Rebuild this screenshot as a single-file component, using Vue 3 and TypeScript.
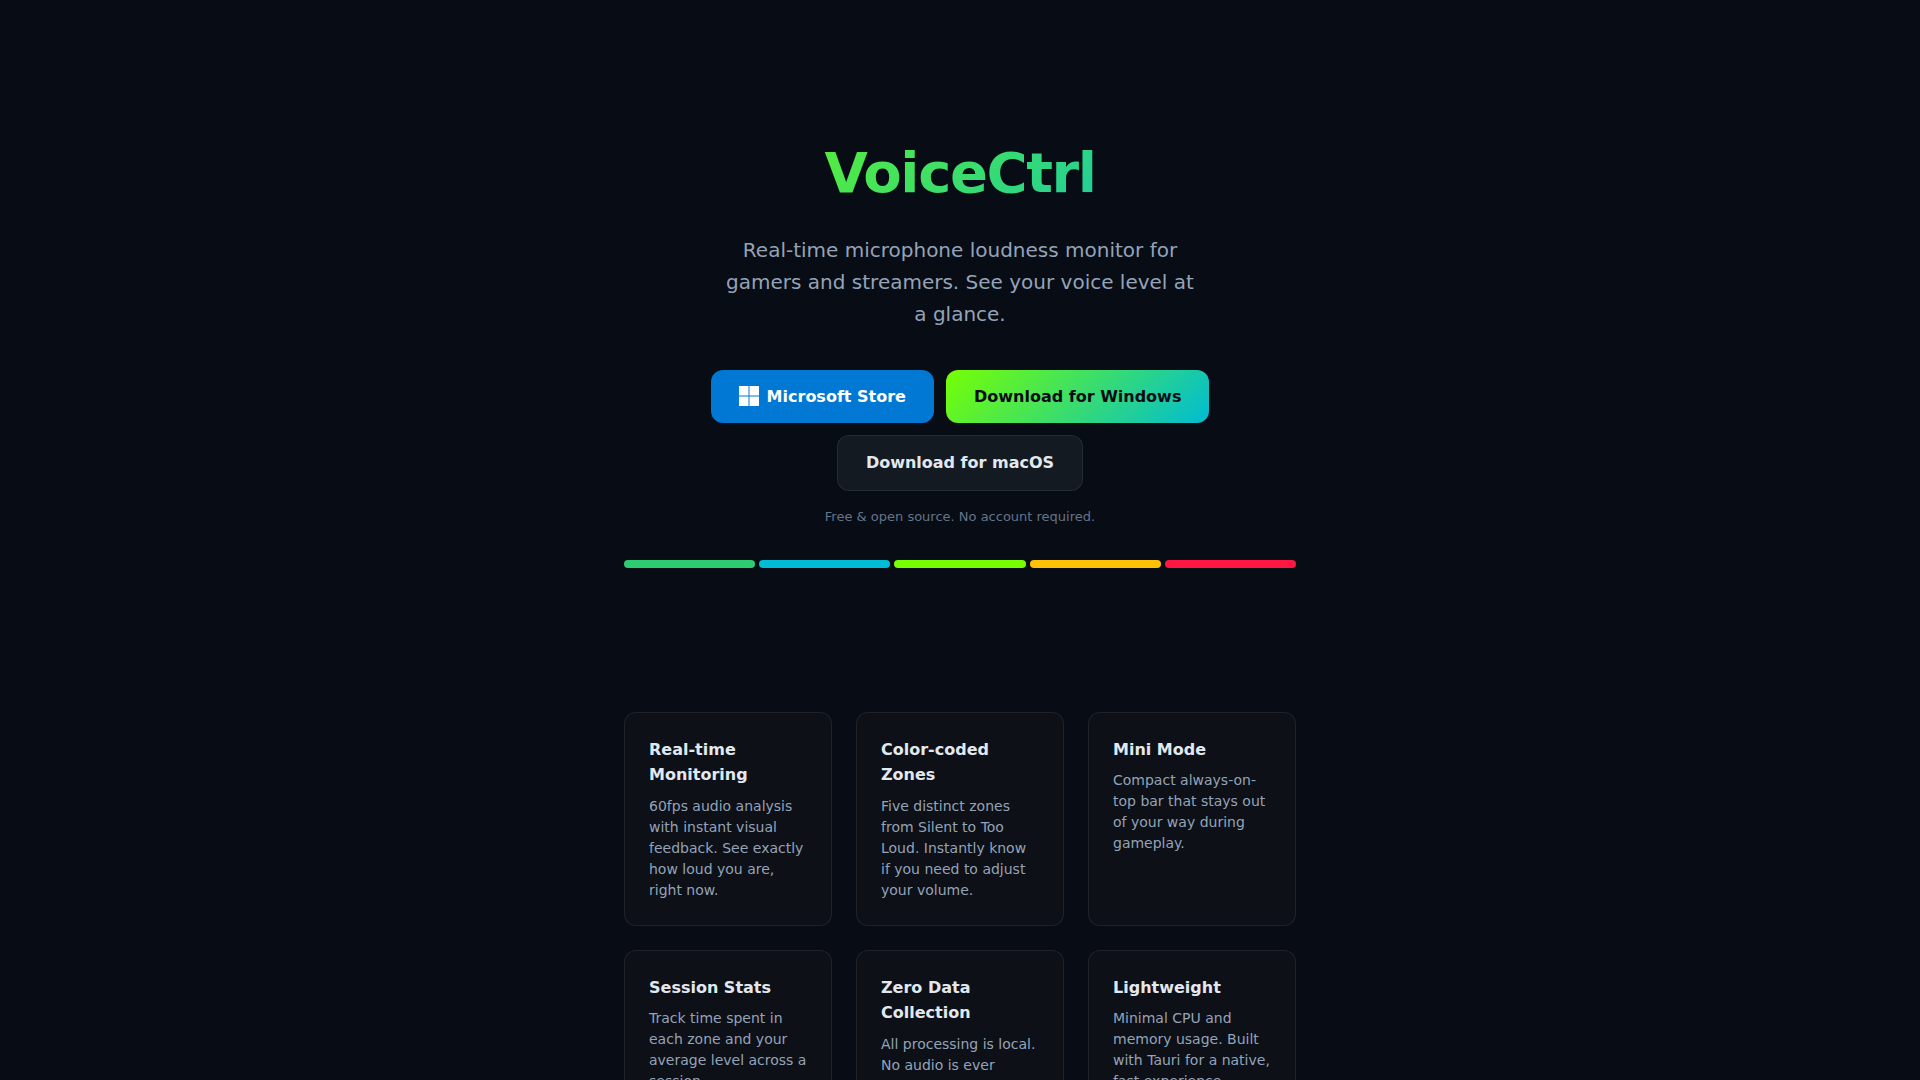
<script setup lang="ts">
interface Feature {
  title: string
  text: string
}

const zones: string[] = ['silent', 'quiet', 'good', 'loud', 'too-loud']

const features: Feature[] = [
  {
    title: 'Real-time Monitoring',
    text: '60fps audio analysis with instant visual feedback. See exactly how loud you are, right now.',
  },
  {
    title: 'Color-coded Zones',
    text: 'Five distinct zones from Silent to Too Loud. Instantly know if you need to adjust your volume.',
  },
  {
    title: 'Mini Mode',
    text: 'Compact always-on-top bar that stays out of your way during gameplay.',
  },
  {
    title: 'Session Stats',
    text: 'Track time spent in each zone and your average level across a session.',
  },
  {
    title: 'Zero Data Collection',
    text: 'All processing is local. No audio is ever recorded or transmitted.',
  },
  {
    title: 'Lightweight',
    text: 'Minimal CPU and memory usage. Built with Tauri for a native, fast experience.',
  },
]
</script>

<template>
  <main class="page">
    <header class="hero">
      <h1>VoiceCtrl</h1>
      <p class="tagline">
        Real-time microphone loudness monitor for gamers and streamers. See your voice level at a glance.
      </p>
      <div class="actions">
        <a class="btn store" href="#store">
          <svg width="20" height="20" viewBox="0 0 21 21" fill="currentColor" aria-hidden="true">
            <path d="M0 0h10v10H0zM11 0h10v10H11zM0 11h10v10H0zM11 11h10v10H11z" />
          </svg>
          Microsoft Store
        </a>
        <a class="btn windows" href="#windows">Download for Windows</a>
        <a class="btn macos" href="#macos">Download for macOS</a>
      </div>
      <p class="note">Free &amp; open source. No account required.</p>
      <div class="zones" aria-hidden="true">
        <span v-for="zone in zones" :key="zone" :class="['zone', zone]"></span>
      </div>
    </header>

    <section class="features">
      <article v-for="feature in features" :key="feature.title" class="card">
        <h2>{{ feature.title }}</h2>
        <p>{{ feature.text }}</p>
      </article>
    </section>
  </main>
</template>

<style>
body {
  margin: 0;
  background: #080c14;
}
</style>

<style scoped>
.page {
  box-sizing: border-box;
  max-width: 720px;
  margin: 0 auto;
  padding: 48px 24px;
  color: #e2e8f0;
  font-family: "DejaVu Sans", sans-serif;
  font-size: 16px;
  line-height: 1.6;
}

.hero {
  padding: 80px 0;
  text-align: center;
}

h1 {
  margin: 0 0 16px;
  font-size: 56px;
  font-weight: 700;
  letter-spacing: -0.025em;
  background: linear-gradient(135deg, #76ff03, #00bcd4);
  background-clip: text;
  -webkit-background-clip: text;
  color: transparent;
}

.tagline {
  max-width: 480px;
  margin: 0 auto 40px;
  color: #94a3b8;
  font-size: 20px;
}

.actions {
  display: flex;
  flex-wrap: wrap;
  justify-content: center;
  gap: 12px;
}

.btn {
  display: inline-flex;
  align-items: center;
  gap: 8px;
  padding: 14px 28px;
  border-radius: 12px;
  font-weight: 600;
  text-decoration: none;
}

.store {
  background: #0078d4;
  color: #fff;
}

.windows {
  background: linear-gradient(135deg, #76ff03, #00bcd4);
  color: #080c14;
}

.macos {
  border: 1px solid rgba(255, 255, 255, 0.08);
  background: #141a22;
  color: #e2e8f0;
}

.note {
  margin: 16px 0 0;
  color: #64748b;
  font-size: 13px;
}

.zones {
  display: flex;
  gap: 4px;
  margin-top: 32px;
}

.zone {
  flex: 1;
  height: 8px;
  border-radius: 4px;
}

.silent { background: #2ecc71; }
.quiet { background: #00bcd4; }
.good { background: #76ff03; }
.loud { background: #ffc107; }
.too-loud { background: #ff1744; }

.features {
  display: grid;
  grid-template-columns: repeat(3, 1fr);
  gap: 24px;
  padding: 64px 0;
}

.card {
  padding: 24px;
  border: 1px solid rgba(255, 255, 255, 0.08);
  border-radius: 12px;
  background: #0d1017;
}

h2 {
  margin: 0 0 8px;
  font-size: 16px;
  font-weight: 600;
}

.card p {
  margin: 0;
  color: #94a3b8;
  font-size: 14px;
  line-height: 1.5;
}

@media (max-width: 640px) {
  .features {
    grid-template-columns: 1fr;
  }
}
</style>
